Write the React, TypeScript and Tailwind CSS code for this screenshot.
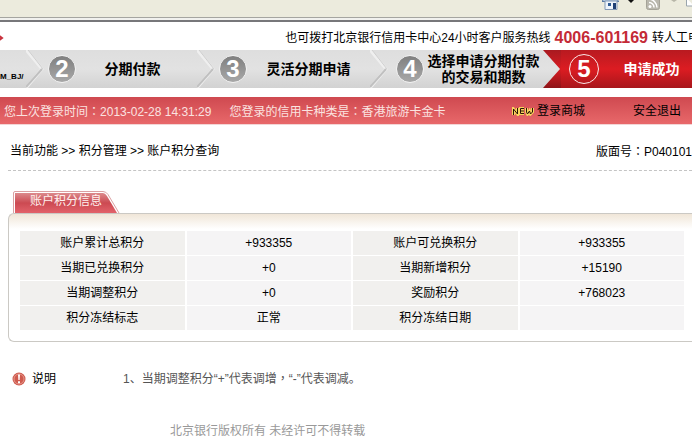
import React from "react";

const rows = [
  ["账户累计总积分", "+933355", "账户可兑换积分", "+933355"],
  ["当期已兑换积分", "+0", "当期新增积分", "+15190"],
  ["当期调整积分", "+0", "奖励积分", "+768023"],
  ["积分冻结标志", "正常", "积分冻结日期", ""],
];

// full-width punctuation that sits in the middle of its cell
function Mid({ children }: { children: React.ReactNode }) {
  return (
    <span className="font-['Noto_Sans_CJK_TC',sans-serif]" lang="zh-TW">
      {children}
    </span>
  );
}

function Toolbar() {
  return (
    <div className="flex h-[22px] flex-col">
      <div className="flex h-[17px] items-start justify-end overflow-hidden bg-[#ecebdd]">
        <svg width="90" height="12" viewBox="0 0 90 12" aria-hidden="true">
          <path d="M0 1.5 3 -3h9l5 4.500z" fill="#b5c9e0" stroke="#5c7ba3" />
          <path d="M3 1h12v8.500H3z" fill="#eef4fb" stroke="#8298b5" />
          <path d="M6 3h3v3H6z" fill="#2f5b94" />
          <path d="M11 3h3v6h-3z" fill="#1d3f75" />
          <path d="M26 0h6l-3 3z" fill="#111" />
          <rect x="44.500" y="-4.500" width="13" height="14" rx="2" fill="#bab8ae" stroke="#a5a398" />
          <circle cx="48" cy="6.500" r="1.500" fill="#fff" />
          <path d="M47 2.500a5 5 0 0 1 5 5M47 -1a9 9 0 0 1 8 8.500" fill="none" stroke="#fff" strokeWidth="1.500" />
          <path d="M69 0h6l-3 2z" fill="#b7b5a8" />
          <path d="M84.500 -2v8H92" fill="#fff" stroke="#9aa5ad" />
        </svg>
      </div>
      <div className="h-px bg-[#a5a5a0]" />
      <div className="h-[2px] bg-[#f1f1ee]" />
      <div className="h-[2px] bg-[#77777a]" />
    </div>
  );
}

function Badge({ n, active }: { n: number; active?: boolean }) {
  return (
    <span
      className={
        active
          ? "flex size-[30px] shrink-0 items-center justify-center rounded-full border border-[#fbe6e6] text-2xl font-bold leading-6 text-white"
          : "flex size-7 shrink-0 items-center justify-center rounded-full border border-[#f2f2f2] bg-linear-to-b from-[#808080] to-[#a8a8a8] text-2xl font-bold leading-6 text-white"
      }
    >
      {n}
    </span>
  );
}

function Chevron({ last }: { last?: boolean }) {
  return (
    <svg
      className="h-full w-[18px] shrink-0"
      viewBox="0 0 18 38"
      preserveAspectRatio="none"
      aria-hidden="true"
    >
      <defs>
        <linearGradient id="redEdge" x2="0" y2="1">
          <stop offset="0" stopColor="#a81a20" />
          <stop offset="0.500" stopColor="#d81c22" />
          <stop offset="1" stopColor="#8e1418" />
        </linearGradient>
      </defs>
      {last ? (
        <path d="M0 0h18v38H0l17-19z" fill="url(#redEdge)" />
      ) : (
        <>
          <path d="M0 0 16 19 0 38" fill="none" stroke="#efefef" strokeWidth="3" />
          <path d="M2 0 17 19" fill="none" stroke="#cfcfcf" />
          <path d="M0 37 16 19" fill="none" stroke="#c0c0c0" strokeWidth="2" />
        </>
      )}
    </svg>
  );
}

function Steps() {
  const label = "flex-1 whitespace-nowrap text-center text-sm leading-4 font-bold";
  return (
    <ol className="grid h-[38px] grid-cols-[minmax(0,44fr)_minmax(0,171fr)_minmax(0,173fr)_minmax(0,173fr)_minmax(0,131fr)] overflow-hidden bg-linear-to-b from-[#dedede] via-[#e2e2e2] to-[#d2d2d2] text-black">
      <li className="flex items-center justify-end">
        <span className="flex-1 pt-4 text-[8px] font-bold">M_BJ/</span>
        <Chevron />
      </li>
      <li className="flex items-center pl-1">
        <Badge n={2} />
        <span className={`${label} pr-2`}>分期付款</span>
        <Chevron />
      </li>
      <li className="flex items-center pl-1">
        <Badge n={3} />
        <span className={label}>灵活分期申请</span>
        <Chevron />
      </li>
      <li className="flex items-center pl-2">
        <Badge n={4} />
        <span className={label}>
          选择申请分期付款
          <br />
          的交易和期数
        </span>
        <Chevron last />
      </li>
      <li className="flex items-center bg-linear-to-b from-[#b81a20] via-[#dc1c22] to-[#a8161b] pl-2 text-white">
        <Badge n={5} active />
        <span className={`${label} pl-3`}>申请成功</span>
      </li>
    </ol>
  );
}

export default function App() {
  return (
    <div className="overflow-hidden bg-white font-['Liberation_Sans','Noto_Sans_CJK_SC',sans-serif] text-xs leading-4 text-black">
      <Toolbar />
      <header>
        <div className="flex h-7 items-center justify-between whitespace-nowrap pt-1">
          <svg width="4" height="8" viewBox="0 0 4 8" aria-hidden="true">
            <path d="M-2 1 2 4-2 7" fill="none" stroke="#c8303c" strokeWidth="2" />
          </svg>
          <p className="flex items-center gap-1">
            <span>也可拨打北京银行信用卡中心24小时客户服务热线</span>
            <strong className="text-base leading-5 text-[#c42a36]">4006-601169</strong>
            <span className="w-10">转人工申请</span>
          </p>
        </div>
        <Steps />
      </header>

      <div className="mt-[9px] flex h-7 items-center border-b border-[#f3d5d5] bg-linear-to-b from-[#cf4950] to-[#e8686a] pl-1 pr-[11px] pt-px text-[#fbe3e0]">
        <span>
          您上次登录时间<Mid>：</Mid>2013-02-28 14:31:29
        </span>
        <span className="ml-[18px] flex-1">
          您登录的信用卡种类是<Mid>：</Mid>香港旅游卡金卡
        </span>
        <a href="#mall" className="flex items-center gap-[3px] text-black">
          <svg width="22" height="9" viewBox="0 0 22 9" aria-hidden="true">
            <g fill="none">
              <path d="M1.500 8V2l4 5V1M12 1.500H8.500v5H12M8.500 4H12M14.500 1v4l1 2 2-3 1 3 2-2V1" stroke="#f8d45c" strokeWidth="3" />
              <path d="M1.500 8V2l4 5V1M12 1.500H8.500v5H12M8.500 4H12M14.500 1v4l1 2 2-3 1 3 2-2V1" stroke="#2a1208" />
            </g>
          </svg>
          登录商城
        </a>
        <a href="#logout" className="ml-12 text-black">
          安全退出
        </a>
      </div>

      <main className="pt-[18px]">
        <div className="ml-2 flex justify-between whitespace-nowrap border-b border-dashed border-[#c4c4c4] pb-[10px] pl-[2px]">
          <nav>当前功能 &gt;&gt; 积分管理 &gt;&gt; 账户积分查询</nav>
          <span>
            版面号<Mid>：</Mid>P040101
          </span>
        </div>

        <section className="ml-2 mt-5">
          <h2 className="relative ml-[5px] h-[22px] w-[107px] text-xs font-normal leading-5 text-[#fff0ee]">
            <svg className="absolute inset-0" width="107" height="22" viewBox="0 0 107 22" aria-hidden="true">
              <defs>
                <linearGradient id="tab" x2="0" y2="1">
                  <stop offset="0" stopColor="#dc8a8c" />
                  <stop offset="0.500" stopColor="#cc4a52" />
                  <stop offset="1" stopColor="#e2626a" />
                </linearGradient>
              </defs>
              <path d="M.5 22V2Q.5.5 2 .5h88q3 0 5 3L106 22" fill="#fff" stroke="#dba0a2" />
              <path d="M2 22V2h88q2 0 4 3l10 17z" fill="url(#tab)" />
            </svg>
            <span className="relative pl-[17px]">账户积分信息</span>
          </h2>
          <div className="rounded-md rounded-r-none border border-r-0 border-[#cbc9c4] bg-[linear-gradient(#f0e6d8,#ffffff_15px)] pb-[10px] pl-[9px] pr-[6px] pt-4">
            <table className="w-full table-fixed border-separate border-spacing-x-[2px] border-spacing-y-px text-center">
              <tbody>
                {rows.map((row) => (
                  <tr key={row[0]} className="h-6">
                    <th scope="row" className="bg-[#f1f0ee] p-0 font-normal">
                      {row[0]}
                    </th>
                    <td className="bg-[#f5f4f5] p-0">{row[1]}</td>
                    <th scope="row" className="bg-[#f1f0ee] p-0 font-normal">
                      {row[2]}
                    </th>
                    <td className="bg-[#f5f4f5] p-0">{row[3]}</td>
                  </tr>
                ))}
              </tbody>
            </table>
          </div>
        </section>

        <section className="mt-7 flex items-center pl-3">
          <svg width="14" height="14" viewBox="0 0 14 14" aria-hidden="true">
            <circle cx="7" cy="7" r="6.500" fill="#cf5a4e" />
            <circle cx="7" cy="7" r="5" fill="none" stroke="#e59a8e" />
            <path d="M6 2.500h2L7.600 8H6.400zM6 9.200h2v2H6z" fill="#fff" />
          </svg>
          <h3 className="w-[97px] pl-[6px] text-xs font-normal">说明</h3>
          <p className="text-[#555]">
            1、当期调整积分“+”代表调增<Mid>，</Mid>“-”代表调减。
          </p>
        </section>
      </main>
      <footer className="pl-[170px] pt-9 text-[#999]">北京银行版权所有 未经许可不得转载</footer>
    </div>
  );
}
